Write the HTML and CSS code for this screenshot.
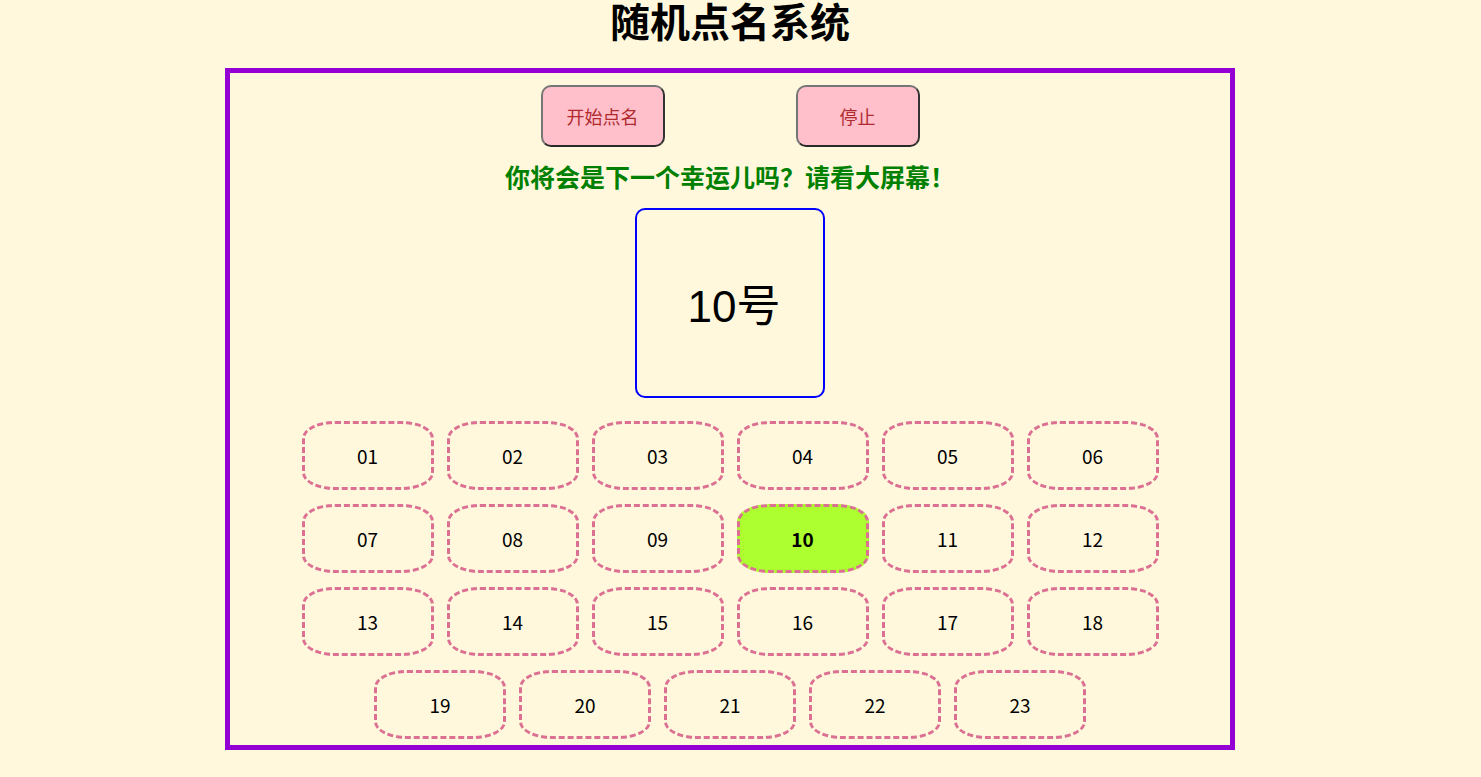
FILE: index.html
```html
<!DOCTYPE html>
<html lang="zh-CN">
<head>
<meta charset="utf-8">
<title>随机点名系统</title>
<link rel="stylesheet" href="styles.css">
</head>
<body>
<h1 class="title">随机点名系统</h1>
<div class="panel">
  <div class="actions">
    <button class="btn">开始点名</button>
    <button class="btn">停止</button>
  </div>
  <p class="hint">你将会是下一个幸运儿吗？请看大屏幕！</p>
  <div class="screen"><span class="screen-text">10号</span></div>
  <div class="grid">
    <div class="cell">01</div><div class="cell">02</div><div class="cell">03</div><div class="cell">04</div><div class="cell">05</div><div class="cell">06</div>
    <div class="cell">07</div><div class="cell">08</div><div class="cell">09</div><div class="cell cell-active">10</div><div class="cell">11</div><div class="cell">12</div>
    <div class="cell">13</div><div class="cell">14</div><div class="cell">15</div><div class="cell">16</div><div class="cell">17</div><div class="cell">18</div>
    <div class="cell">19</div><div class="cell">20</div><div class="cell">21</div><div class="cell">22</div><div class="cell">23</div>
  </div>
</div>
</body>
</html>
```
FILE: styles.css
```css
html, body {
  background: #fff8dc;
}
body {
  margin: 0;
  padding-right: 21px;
  font-family: "Noto Sans CJK SC", "Liberation Sans", sans-serif;
  color: #000;
}
.title {
  margin: 0 0 30px;
  padding-top: 2px;
  font-size: 40px;
  line-height: 36px;
  font-weight: bold;
  text-align: center;
}
.panel {
  width: 1000px;
  margin: 0 auto;
  border: 5px solid #9400d3;
  padding: 12px 0 6px;
  display: flex;
  flex-direction: column;
  align-items: center;
}
.actions {
  display: flex;
  gap: 131px;
}
.btn {
  width: 124px;
  height: 62px;
  background: #ffc0cb;
  border: 2px solid;
  border-color: #767676 #333 #2a2a2a #767676;
  border-radius: 10px;
  color: #b02a30;
  font-family: "Noto Sans CJK SC", sans-serif;
  font-size: 18px;
  padding: 0;
}
.hint {
  margin: 13px 0 0;
  font-size: 25px;
  line-height: 32px;
  font-weight: bold;
  color: #008000;
}
.screen {
  margin-top: 16px;
  width: 186px;
  height: 186px;
  border: 2px solid #0000ff;
  border-radius: 10px;
  display: flex;
  align-items: center;
  justify-content: center;
}
.screen-text {
  font-family: "Liberation Sans", "Noto Sans CJK SC", sans-serif;
  font-size: 44px;
  padding-left: 8px;
}
.grid {
  margin-top: 23px;
  width: 857px;
  display: flex;
  flex-wrap: wrap;
  justify-content: center;
  column-gap: 13px;
  row-gap: 14px;
}
.cell {
  width: 126px;
  height: 63px;
  border: 3px dashed #db7093;
  border-radius: 25%;
  display: flex;
  align-items: center;
  justify-content: center;
  font-size: 19px;
}
.cell-active {
  background: #adff2f;
  font-weight: bold;
}
```
